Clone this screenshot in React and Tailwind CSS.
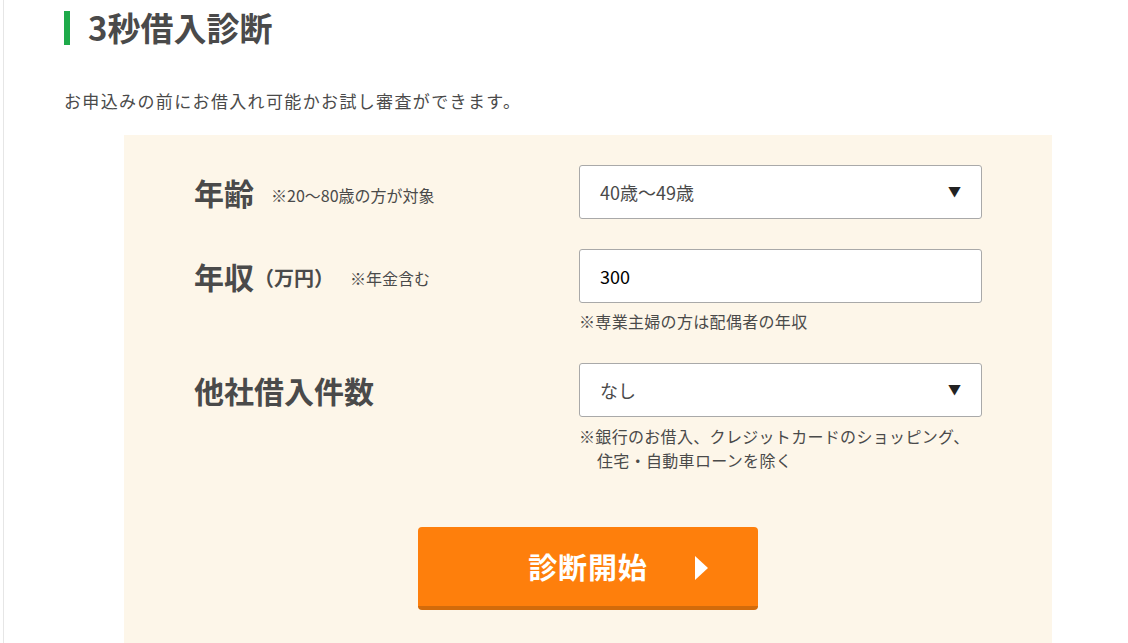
const font = { fontFamily: '"Noto Sans CJK JP", "Noto Sans", sans-serif' }

function Select({ value }) {
  return (
    <div className="relative flex items-center h-[54px] w-[403px] bg-white border border-[#a9a9a9] rounded-[3px] pl-[20px] text-[18px] text-[#4a4a4a]">
      {value}
      <span className="absolute right-[20px] top-[15px] text-[13px] text-[#222]">▼</span>
    </div>
  )
}

export default function App() {
  return (
    <div className="min-h-[643px] bg-white overflow-hidden" style={font}>
      <div className="ml-[3px] border-l border-[#e6e6e6] pl-[60px] pt-[11px] text-[#4a4a4a]">
        {/* Heading */}
        <div className="flex items-center gap-[18px]">
          <span className="w-[6px] h-[34px] bg-[#1eaa4a]" />
          <h1 className="text-[33px] leading-[34px] font-bold text-[#4a4a4a] -mt-[2px]">3秒借入診断</h1>
        </div>

        <p className="mt-[43px] text-[17px] leading-[26px] tracking-[0.08em]">
          お申込みの前にお借入れ可能かお試し審査ができます。
        </p>

        {/* Form box */}
        <div className="mt-[21px] ml-[60px] w-[928px] bg-[#fdf6e9] px-[70px] pt-[30px] pb-[60px]">
          {/* Age */}
          <div className="flex">
            <div className="w-[385px] h-[54px] flex items-center">
              <span className="text-[30px] font-bold">年齢</span>
              <span className="ml-[17px] text-[16px] mt-[6px]">※20〜80歳の方が対象</span>
            </div>
            <Select value="40歳〜49歳" />
          </div>

          {/* Income */}
          <div className="flex mt-[30px]">
            <div className="w-[385px] h-[54px] flex items-center">
              <span className="text-[30px] font-bold">年収</span>
              <span className="text-[20px] font-semibold mt-[4px]">（万円）</span>
              <span className="ml-[16px] text-[16px] mt-[4px]">※年金含む</span>
            </div>
            <div>
              <div className="flex items-center h-[54px] w-[403px] bg-white border border-[#a9a9a9] rounded-[3px] pl-[20px] text-[18px] text-black">
                300
              </div>
              <p className="mt-[8px] text-[16px] leading-[20px] tracking-[0.02em]">※専業主婦の方は配偶者の年収</p>
            </div>
          </div>

          {/* Other loans */}
          <div className="flex mt-[32px]">
            <div className="w-[385px] h-[54px] flex items-center">
              <span className="text-[30px] font-bold">他社借入件数</span>
            </div>
            <div>
              <Select value="なし" />
              <p className="mt-[7px] text-[16px] leading-[24px] tracking-[0.02em]">
                ※銀行のお借入、クレジットカードのショッピング、
                <br />
                <span className="ml-[18px]">住宅・自動車ローンを除く</span>
              </p>
            </div>
          </div>

          {/* Button */}
          <div className="flex mt-[55px] pl-[224px]">
            <button
              type="button"
              className="relative w-[340px] h-[83px] rounded-[4px] bg-[#fe7f0c] border-b-[4px] border-[#d26b0b] text-white text-[29px] font-bold flex items-center justify-center"
            >
              <span className="tracking-[0.03em]">診断開始</span>
              <span className="absolute right-[50px] top-[29px] w-0 h-0 border-y-[12px] border-y-transparent border-l-[13px] border-l-white" />
            </button>
          </div>
        </div>
      </div>
    </div>
  )
}
